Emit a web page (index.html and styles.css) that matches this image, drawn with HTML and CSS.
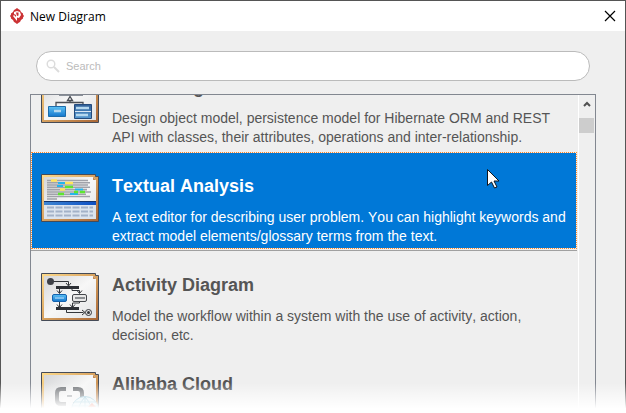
FILE: index.html
```html
<!doctype html>
<html lang="en">
  <head>
    <meta charset="utf-8">
    <meta name="viewport" content="width=device-width, initial-scale=1.0">
    <title>New Diagram</title>
    <link rel="stylesheet" href="styles.css">
  </head>
  <body>
    <div class="dialog">
      <header class="titlebar">
        <svg class="logo" width="14" height="16" viewBox="0 0 14 16">
          <path fill="#cb3234" d="M7 0l2 1.500 1 .5 1 2 2 1.500v1L14 8l-1 1.500v1L11 12l-1 2-1 .5L7 16l-2-1.500L4 14l-1-2-2-1.500v-1L0 8l1-1.500v-1L3 4l1-2 1-.5z"/>
          <path fill="#fff" d="M4 4l3-1 3 1 1 3-2 3-2-.5V13L3 8l1-1 2 2V7L4 6z"/>
          <path fill="#cb3234" d="M6 4.500h2.500v3L7 8z"/>
        </svg>
        <h1>New Diagram</h1>
        <button class="close" aria-label="Close">
          <svg width="12" height="12" viewBox="0 0 12 12"><path d="M1 1l10 10M11 1L1 11" stroke="#000" stroke-width="1.200"/></svg>
        </button>
      </header>

      <main class="content">
        <div class="search">
          <svg width="14" height="14" viewBox="0 0 14 14" fill="none" stroke="#dcdcdc">
            <circle cx="5" cy="5" r="3.800" stroke-width="1.400"/>
            <path d="M8 8l5 5" stroke-width="2"/>
          </svg>
          <input type="text" placeholder="Search" aria-label="Search">
        </div>

        <div class="list-box">
          <ul class="diagrams">
            <li>
              <svg class="thumb" viewBox="0 0 58 48">
                <use href="#frame"/>
                <path d="M18 6h24v15H18z" fill="#8a9099"/>
                <path d="M29 21.500l-2.500 4h5zM29 25.500v2M15 32v-4.500h27V30" fill="none" stroke="#4a4e55" stroke-width="1.300"/>
                <path d="M7.500 31.500h17v10h-17z" fill="url(#cyan)" stroke="#1d6cab"/>
                <path d="M33.500 29.500h17v14h-17z" fill="url(#navy)" stroke="#244b7d"/>
                <path d="M34 36.500h16" stroke="#dce8f5"/>
                <path d="M13 36h7M35 33h13M35 40h12" stroke="#b5d8ef" stroke-width="2.500"/>
              </svg>
              <div>
                <h2>Class Diagram</h2>
                <p>Design object model, persistence model for Hibernate ORM and REST<br>API with classes, their attributes, operations and inter-relationship.</p>
              </div>
            </li>
            <li class="selected">
              <svg class="thumb" viewBox="0 0 58 48">
                <use href="#frame"/>
                <g stroke="#a0a2a9" stroke-width="1.600">
                  <path d="M6 6.500h41M6 8.800h43M6 11h41M6 13.300h43M6 15.600h40M6 18h44M6 20.200h39M6 22.500h43M6 25h10"/>
                </g>
                <path d="M10 6.500h6M24 9h8M19 15.500h5M33 18h4" stroke="#ffe45a" stroke-width="2.500"/>
                <path d="M17 9h7M16 12h6M34 15.500h8M29 20h8" stroke="#25b4ed" stroke-width="2"/>
                <path d="M24 13h8M33 18h4M39 18h5M17 20h6" stroke="#5ee62f" stroke-width="2.500"/>
                <path d="M3 27h52v18H3z" fill="#dce4ee"/>
                <path d="M3 27.500h52" stroke="#123570"/>
                <path d="M3 29.500h52" stroke="url(#header)" stroke-width="3"/>
                <path d="M6 33.500h46M6 37.500h46M6 41.500h46" stroke="#a3b2c8" stroke-width="2" stroke-dasharray="7 1.500"/>
              </svg>
              <div>
                <h2>Textual Analysis</h2>
                <p>A text editor for describing user problem. You can highlight keywords and<br>extract model elements/glossary terms from the text.</p>
              </div>
              <svg class="cursor" width="12" height="20" viewBox="0 0 12 20">
                <path d="M.5.500v16l4-3.500 3 6 2.500-1-3-6h5z" fill="#fff" stroke="#10151c"/>
              </svg>
            </li>
            <li>
              <svg class="thumb" viewBox="0 0 58 48">
                <use href="#frame"/>
                <g fill="none" stroke="#33363b" stroke-width="1">
                  <path d="M10 8.500h17.500v4M25 10l2.500 3 2.500-3M18.500 15v5M16 17.500l2.500 3 2.500-3M31 15v2.500h7.500V20M36 17.500l2.500 3 2.500-3M18.500 28v6M16 31.500l2.500 3 2.500-3M38.500 28v2h-7v4M29 31.500l2.500 3 2.500-3M25.500 37v2.500h17M41 37l3 2.500-3 2.500"/>
                  <circle cx="47.500" cy="39.500" r="3"/>
                </g>
                <circle cx="9.500" cy="8.500" r="3.500" fill="#3e4047"/>
                <circle cx="47.500" cy="39.500" r="1.500" fill="#33363b"/>
                <path d="M15 13h23v3H15zM15 34h23v3H15z" fill="#2c2f35"/>
                <rect x="11.500" y="21.500" width="14" height="7" rx="1.500" fill="url(#cyan)" stroke="#1562ae"/>
                <rect x="31.500" y="21.500" width="14" height="7" rx="1.500" fill="#e8e8e8" stroke="#44474c"/>
                <path d="M14 25h9" stroke="#7fc0f0" stroke-width="2"/>
                <path d="M34 25h10" stroke="#8d9094" stroke-width="2"/>
              </svg>
              <div>
                <h2>Activity Diagram</h2>
                <p>Model the workflow within a system with the use of activity, action,<br>decision, etc.</p>
              </div>
            </li>
            <li>
              <svg class="thumb" viewBox="0 0 58 48">
                <use href="#frame"/>
                <path d="M25 17h-5q-4 0-4 4v7q0 4 4 4h5M32 17h5q4 0 4 4v7q0 4-4 4h-5" fill="none" stroke="#75787c" stroke-width="4"/>
                <path d="M26 24h5" stroke="#a5a8ac" stroke-width="2"/>
                <g fill="#e2f1f7" stroke="#8fc3d6">
                  <circle cx="44" cy="38" r="13.500"/>
                  <path d="M31 34h26M33 30h22M44 25v20M44 25q-8 8-7 20M44 25q8 8 7 20" fill="none"/>
                </g>
                <path d="M47 35l4-4 4 4z" fill="#e7593f"/>
              </svg>
              <div>
                <h2>Alibaba Cloud</h2>
              </div>
            </li>
          </ul>
          <div class="scrollbar">
            <button aria-label="Scroll up">
              <svg width="8" height="6" viewBox="0 0 8 6"><path d="M1 5l3-3 3 3" fill="none" stroke="#505050" stroke-width="2"/></svg>
            </button>
            <div class="handle"></div>
          </div>
        </div>
      </main>
    </div>
    <div class="fade"></div>

    <!-- shared picture frame and fills of the diagram thumbnails -->
    <svg class="defs" width="0" height="0" aria-hidden="true">
      <defs>
        <linearGradient id="gold" x2="1" y2="1">
          <stop offset="0" stop-color="#ffdc8b"/>
          <stop offset=".4" stop-color="#e0ad68"/>
          <stop offset="1" stop-color="#a86535"/>
        </linearGradient>
        <linearGradient id="paper" x2="1" y2="1">
          <stop offset="0" stop-color="#d5d6d8"/>
          <stop offset=".5" stop-color="#f7f7f7"/>
          <stop offset="1" stop-color="#e2e3e5"/>
        </linearGradient>
        <linearGradient id="cyan" x2="0" y2="1">
          <stop offset="0" stop-color="#5cc2f5"/>
          <stop offset="1" stop-color="#1576cc"/>
        </linearGradient>
        <linearGradient id="navy" x2="0" y2="1">
          <stop offset="0" stop-color="#305f98"/>
          <stop offset="1" stop-color="#5598d0"/>
        </linearGradient>
        <linearGradient id="header" gradientUnits="userSpaceOnUse" x1="3" x2="55">
          <stop offset="0" stop-color="#3f86d2"/>
          <stop offset="1" stop-color="#0c4fc4"/>
        </linearGradient>
        <g id="frame">
          <path d="M.5.500h54v2h3v45H.500z" fill="url(#gold)" stroke="#454b57"/>
          <path d="M3 3h49l3 3v39H3z" fill="url(#paper)"/>
          <path d="M52 3v3h3z" fill="#c28a54"/>
        </g>
      </defs>
    </svg>
  </body>
</html>
```

FILE: styles.css
```css
* {
  box-sizing: border-box;
}

body {
  margin: 0;
  background: #fff;
  font-family: "Liberation Sans", Arial, sans-serif;
}

h1, h2, p, ul {
  margin: 0;
  padding: 0;
}

button {
  display: flex;
  align-items: center;
  justify-content: center;
  padding: 0;
  border: 0;
  background: none;
}

.dialog {
  display: flex;
  flex-direction: column;
  height: 100vh;
  overflow: hidden;
  border: 1px solid #555;
  border-bottom: 0;
  background: #efefef;
}

.titlebar {
  display: flex;
  align-items: center;
  flex: none;
  height: 30px;
  padding: 0 7px 0 9px;
  background: #fff;
}

.titlebar h1 {
  flex: 1;
  margin-left: 6px;
  font: 12px "Open Sans", sans-serif;
}

.close {
  width: 16px;
  height: 16px;
}

.content {
  display: flex;
  flex-direction: column;
  flex: 1;
  min-height: 0;
  padding: 20px 29px 0;
}

.search {
  display: flex;
  align-items: center;
  flex: none;
  gap: 6px;
  height: 30px;
  margin: 0 6px 13px;
  padding: 0 9px;
  border: 1px solid #bbb;
  border-radius: 15px;
  background: #fff;
}

.search input {
  flex: 1;
  padding: 0;
  border: 0;
  outline: 0;
  background: none;
  font: 11px "Liberation Sans", Arial, sans-serif;
}

.search input::placeholder {
  color: #bbb;
}

.list-box {
  display: flex;
  flex: 1;
  min-height: 0;
  overflow: hidden;
  border: 1px solid #828790;
  border-bottom: 0;
}

/* scrolled part of the way through the first entry */
.diagrams {
  flex: 1;
  margin: -42px 1px 0 0;
  list-style: none;
  font-kerning: none;
}

.diagrams li {
  position: relative;
  display: flex;
  gap: 13px;
  height: 97px;
  margin-bottom: 2px;
  padding: 21px 0 0 9px;
  border: 1px dotted transparent;
  color: #555;
  white-space: nowrap;
}

.diagrams .selected {
  border-color: #ff8728;
  background: #0078d7;
  background-clip: padding-box;
  box-shadow: 0 1px #efefef, 0 2px #a0a0a0;
  color: #fff;
}

.thumb {
  flex: none;
  width: 58px;
  height: 48px;
}

.diagrams h2 {
  font-size: 18px;
  line-height: 24px;
}

.diagrams p {
  margin-top: 10px;
  font-size: 14px;
  line-height: 19px;
}

.cursor {
  position: absolute;
  top: 16px;
  right: 77px;
}

.scrollbar {
  flex: none;
  width: 17px;
  padding-right: 1px;
  border-left: 1px solid #fff;
}

.scrollbar button {
  width: 15px;
  height: 17px;
}

.handle {
  height: 15px;
  margin-top: 6px;
  background: #cdcdcd;
}

.fade {
  position: absolute;
  right: 0;
  bottom: 0;
  left: 0;
  height: 30px;
  background: linear-gradient(rgba(255, 255, 255, 0), #fff 85%);
}

.defs {
  position: absolute;
}
```
